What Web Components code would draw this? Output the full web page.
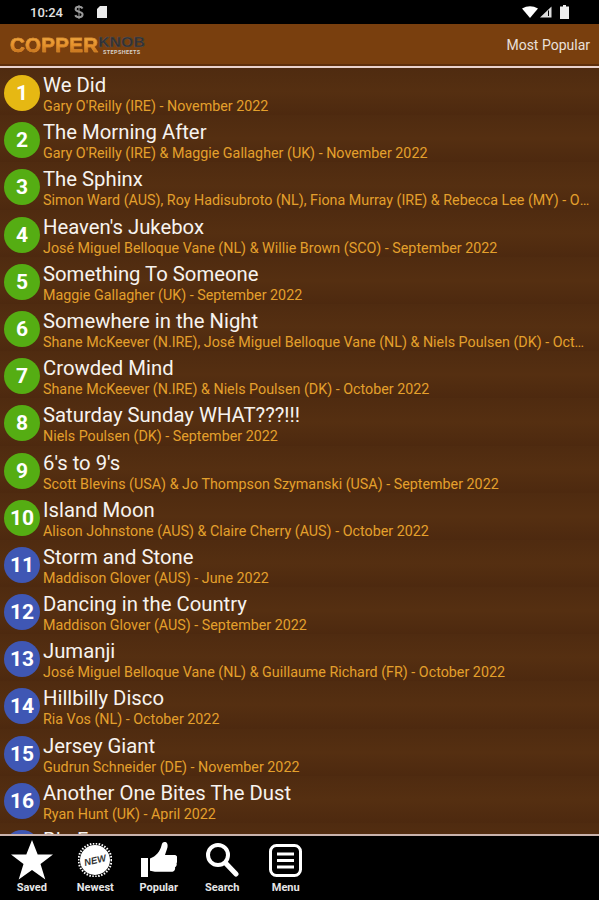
<!DOCTYPE html>
<html><head><meta charset="utf-8">
<style>
html,body{margin:0;padding:0;height:900px;overflow:hidden;background:#000;font-family:Roboto,"Liberation Sans",sans-serif}
app-shell{display:flex;flex-direction:column;width:599px;height:900px}
</style></head><body>
<app-shell></app-shell>
<script>
const data=[
["We Did","Gary O'Reilly (IRE) - November 2022"],
["The Morning After","Gary O'Reilly (IRE) & Maggie Gallagher (UK) - November 2022"],
["The Sphinx","Simon Ward (AUS), Roy Hadisubroto (NL), Fiona Murray (IRE) & Rebecca Lee (MY) - October 2022"],
["Heaven's Jukebox","José Miguel Belloque Vane (NL) & Willie Brown (SCO) - September 2022"],
["Something To Someone","Maggie Gallagher (UK) - September 2022"],
["Somewhere in the Night","Shane McKeever (N.IRE), José Miguel Belloque Vane (NL) & Niels Poulsen (DK) - October 2022"],
["Crowded Mind","Shane McKeever (N.IRE) & Niels Poulsen (DK) - October 2022"],
["Saturday Sunday WHAT???!!!","Niels Poulsen (DK) - September 2022"],
["6's to 9's","Scott Blevins (USA) & Jo Thompson Szymanski (USA) - September 2022"],
["Island Moon","Alison Johnstone (AUS) & Claire Cherry (AUS) - October 2022"],
["Storm and Stone","Maddison Glover (AUS) - June 2022"],
["Dancing in the Country","Maddison Glover (AUS) - September 2022"],
["Jumanji","José Miguel Belloque Vane (NL) & Guillaume Richard (FR) - October 2022"],
["Hillbilly Disco","Ria Vos (NL) - October 2022"],
["Jersey Giant","Gudrun Schneider (DE) - November 2022"],
["Another One Bites The Dust","Ryan Hunt (UK) - April 2022"],
["Big Frog",""]
];
class StatusBar extends HTMLElement{constructor(){super();this.attachShadow({mode:'open'}).innerHTML=`<style>
:host{display:flex;align-items:center;height:24px;background:#000;color:#e2e2e2;font:500 13px Roboto,sans-serif;padding:0 30px;box-sizing:border-box;flex:none}
.t{width:43px}.sp{flex:1}svg{display:block}
</style><span class="t">10:24</span>
<svg width="12" height="14" viewBox="0 0 12 14" style="margin-right:11px"><path d="M9.5 3.5C9 2.3 7.6 1.8 6 1.8S2.6 2.6 2.6 4.2C2.6 7.5 9.6 6 9.6 9.6c0 1.7-1.6 2.6-3.6 2.6S2.800 11.500 2.300 10.200" fill="none" stroke="#9a9a9a" stroke-width="2"/><path d="M6 0v14" stroke="#9a9a9a"/></svg>
<svg width="12" height="14" viewBox="0 0 12 14"><path d="M4 1h7v12H1V4z" fill="#ececec"/></svg>
<span class="sp"></span>
<svg width="16" height="12" viewBox="0 0 16 12" style="margin-right:1px"><path d="M0 2.500Q8-2 16 2.500L8 12z" fill="#fff"/></svg>
<svg width="13" height="12" viewBox="0 0 13 12" style="margin-right:8px"><path d="M12.500.5V11.500H1z" fill="#ddd"/><path d="M9.500 4.500V10" stroke="#000" stroke-width="1"/></svg>
<svg width="9" height="14" viewBox="0 0 9 14" style="margin-right:0"><path d="M3 0h3v1.500h3V14H0V1.500h3z" fill="#eee"/></svg>`}}
class TopBar extends HTMLElement{constructor(){super();this.attachShadow({mode:'open'}).innerHTML=`<style>
:host{display:flex;align-items:center;justify-content:space-between;flex:none;box-sizing:border-box;height:44px;background:#793f0e;border-bottom:2px solid #ead2cc;box-shadow:inset 0 -2px 0 #5e2f0c;padding:0 9px 0 10px}
.logo{display:flex;align-items:flex-start;height:26px;margin-top:-1px;position:relative}
.c{font:900 20.500px/26px "Liberation Sans",sans-serif;letter-spacing:.3px;background:linear-gradient(#f0b24a,#e9932d 50%,#a85a12);-webkit-background-clip:text;background-clip:text;color:transparent;-webkit-text-stroke:.5px #d98a2c}
.k{display:flex;flex-direction:column;align-items:center;margin-top:3px}
.k b{font:900 15.500px/14px "Liberation Sans",sans-serif;color:#2f2f33;letter-spacing:.3px;-webkit-text-stroke:.4px #555}
.k i{font:700 5.500px/7px Roboto,sans-serif;color:#d8d0c8;letter-spacing:.4px;font-style:normal}
.r{font:400 14px Roboto,sans-serif;color:#e9e0da}
</style><div class="logo"><span class="c">COPPER</span><span class="k"><b>KNOB</b><i>STEPSHEETS</i></span></div><span class="r">Most Popular</span>`}}
class SongRow extends HTMLElement{constructor(){super();this.attachShadow({mode:'open'}).innerHTML=`<style>
:host{display:flex;height:47.200px;flex:none;box-sizing:border-box;gap:3px;padding:6px 0 0 4px;overflow:hidden;background:linear-gradient(#4f2b10,#552f11 50%,#4d290f)}
.b{flex:none;width:36px;height:36px;border-radius:50%;display:flex;align-items:center;justify-content:center;color:#fff;font:700 21px Roboto,sans-serif;margin-top:1px}
.m{min-width:0;flex:1;display:flex;flex-direction:column;margin-top:-1px}
.t{font:400 20.300px/24px Roboto,sans-serif;color:#f7f3ef;white-space:nowrap}
.s{font:400 14.300px/19px Roboto,sans-serif;color:#e4a02c;white-space:nowrap;overflow:hidden;text-overflow:ellipsis;margin-right:7px}
</style><div class="b"><slot name="n"></slot></div><div class="m"><div class="t"><slot name="t"></slot></div><div class="s"><slot name="s"></slot></div></div>`}
connectedCallback(){const n=+this.getAttribute('n');this.shadowRoot.querySelector('.b').style.background=n==1?'#e6b813':n<=10?'#55ad13':'#3f57b4'}}
class SongList extends HTMLElement{constructor(){super();this.attachShadow({mode:'open'}).innerHTML=`<style>
:host{display:flex;flex-direction:column;flex:none;height:766px;overflow:hidden;background:#50290f}</style><slot></slot>`}}
class NavItem extends HTMLElement{constructor(){super();this.attachShadow({mode:'open'}).innerHTML=`<style>
:host{display:flex;flex-direction:column;align-items:center;width:63.500px;flex:none;color:#e6e6e6}
.i{height:42px;display:flex;align-items:center;justify-content:center;margin-top:3px}
.l{font:700 11px/13px Roboto,sans-serif;margin-top:0}
</style><div class="i"><slot></slot></div><div class="l">${this.getAttribute('label')}</div>`}}
class BottomBar extends HTMLElement{constructor(){super();this.attachShadow({mode:'open'}).innerHTML=`<style>
:host{display:flex;flex:1;background:#000;border-top:2px solid #c9b3ad;box-sizing:border-box;padding:0 0 0 0}</style><slot></slot>`}}
[['status-bar',StatusBar],['top-bar',TopBar],['song-row',SongRow],['song-list',SongList],['nav-item',NavItem],['bottom-bar',BottomBar]].forEach(([a,b])=>customElements.define(a,b));
customElements.define('app-shell',class extends HTMLElement{constructor(){super();this.attachShadow({mode:'open'}).innerHTML=`<style>:host{display:flex;flex-direction:column;width:599px;height:900px}</style><slot></slot>`}
connectedCallback(){
const esc=s=>s.replace(/&/g,'&amp;');
const rows=data.map((d,i)=>`<song-row n="${i+1}"><span slot="n">${i+1}</span><span slot="t">${esc(d[0])}</span><span slot="s">${esc(d[1])}</span></song-row>`).join('');
this.innerHTML=`<status-bar></status-bar><top-bar></top-bar><song-list>${rows}</song-list><bottom-bar>
<nav-item label="Saved"><svg width="42" height="40" viewBox="0 0 42 40"><path d="M21 0l5.700 14.500H42L29.500 24l4.800 15.500L21 30 7.700 39.500 12.500 24 0 14.500h15.300z" fill="#fff"/></svg></nav-item>
<nav-item label="Newest"><svg width="34" height="34" viewBox="0 0 34 34"><circle cx="17" cy="17" r="15" fill="#fff"/><circle cx="17" cy="17" r="16.500" fill="none" stroke="#fff" stroke-width="2" stroke-dasharray="1.500 1.500"/><text x="17" y="20.500" text-anchor="middle" transform="rotate(-14 17 17)" font-family="Liberation Sans" font-weight="900" font-style="italic" font-size="9.500" fill="#333">NEW</text></svg></nav-item>
<nav-item label="Popular"><svg width="36" height="38" viewBox="0 0 36 38"><path d="M0 17h7v19H0z" fill="#fff"/><path d="M9 17.500c6-2 10-7 11.500-13 .5-3 2-4 4-3.500 2.500 1 2.500 4 1.500 7-.6 2-1.500 4-2 6h9c3 0 3.500 2 3 3.500 1 1.500 1 3.500-.5 4.500.6 1.800 0 3.500-1.500 4.300.5 2-.5 4-2.500 4.500H14c-2 0-3-1-5-1z" fill="#fff"/></svg></nav-item>
<nav-item label="Search"><svg width="34" height="36" viewBox="0 0 34 36"><circle cx="13" cy="13" r="10" fill="none" stroke="#fff" stroke-width="4"/><path d="M20.500 21L31 32" stroke="#fff" stroke-width="5" stroke-linecap="round"/></svg></nav-item>
<nav-item label="Menu"><svg width="33" height="33" viewBox="0 0 33 33"><rect x="1.500" y="1.500" width="30" height="30" rx="6" fill="none" stroke="#fff" stroke-width="3"/><path d="M8 10h17M8 16.500h17M8 23h17" stroke="#fff" stroke-width="3.200"/></svg></nav-item>
</bottom-bar>`;}});
</script></body></html>
